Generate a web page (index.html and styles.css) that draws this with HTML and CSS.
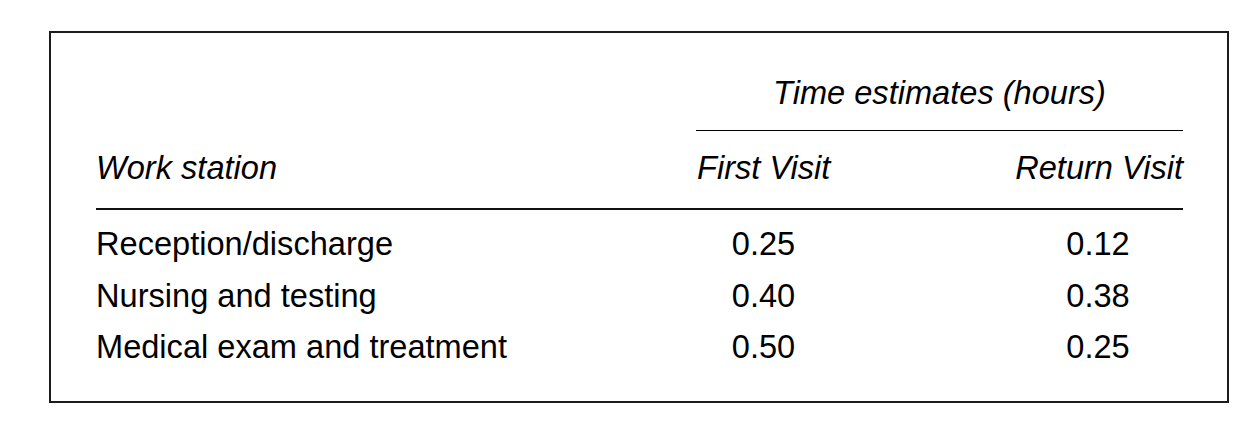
FILE: index.html
```html
<!DOCTYPE html>
<html lang="en">
<head>
<meta charset="utf-8">
<title>Time estimates</title>
<link rel="stylesheet" href="styles.css">
</head>
<body>
<div class="frame">
  <div class="grid">
    <div class="group-title">Time estimates (hours)</div>
    <div class="head head-station">Work station</div>
    <div class="head head-num">First Visit</div>
    <div class="head head-num head-right">Return Visit</div>
    <div class="rule"></div>

    <div class="cell name">Reception/discharge</div>
    <div class="cell num">0.25</div>
    <div class="cell num">0.12</div>

    <div class="cell name">Nursing and testing</div>
    <div class="cell num">0.40</div>
    <div class="cell num">0.38</div>

    <div class="cell name">Medical exam and treatment</div>
    <div class="cell num">0.50</div>
    <div class="cell num">0.25</div>
  </div>
</div>
</body>
</html>
```

FILE: styles.css
```css
html, body {
  margin: 0;
  padding: 0;
  background: #ffffff;
}

body {
  padding: 31px 0 0 49px;
  font-family: "Liberation Sans", Arial, Helvetica, sans-serif;
  color: #000;
}

.frame {
  box-sizing: border-box;
  width: 1180px;
  height: 372px;
  border: 2px solid #1c1c1c;
  padding: 41px 44px 0 45px;
}

.grid {
  display: grid;
  grid-template-columns: minmax(0, 1fr) 133px 170px;
  column-gap: 183px;
  font-size: 32.6px;
  line-height: 37px;
}

.group-title {
  grid-column: 2 / 4;
  font-style: italic;
  text-align: center;
  padding-bottom: 19px;
  border-bottom: 1px solid #000;
  margin-left: -1px;
}

.head {
  font-style: italic;
  white-space: nowrap;
  padding-top: 18px;
  padding-bottom: 22px;
}

.head-station {
  grid-column: 1;
}

.head-num {
  text-align: left;
}

.head-right {
  text-align: right;
}

.rule {
  grid-column: 1 / 4;
  height: 2px;
  background: #111;
  margin-bottom: 8px;
}

.cell {
  white-space: nowrap;
  line-height: 51.5px;
}

.num {
  text-align: center;
}
```
